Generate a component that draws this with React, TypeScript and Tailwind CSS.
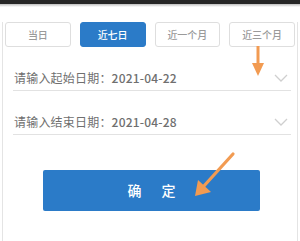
import React from "react";

const font = { fontFamily: '"Noto Sans CJK SC", "Noto Sans", Roboto, sans-serif' };

function Chevron() {
  return (
    <svg width="14" height="8" viewBox="0 0 14 8" className="shrink-0">
      <path d="M1 1 L7 7 L13 1" fill="none" stroke="#cfcfcf" strokeWidth="1.3" />
    </svg>
  );
}

function Row({ label, value, mt }: { label: string; value: string; mt: string }) {
  return (
    <div className={`${mt} ml-[10px] mr-[6px] h-[25px] flex items-center justify-between border-b border-[#e2e2e2] pl-[1px] pr-[3px]`}>
      <span className="text-[12px] leading-none text-[#6f6f6f] tracking-[0.2px]">
        {label}
        <span className="font-medium">{value}</span>
      </span>
      <Chevron />
    </div>
  );
}

export default function App() {
  const tabs = ["当日", "近七日", "近一个月", "近三个月"];
  return (
    <div className="relative w-[300px] h-[241px] bg-white overflow-hidden" style={font}>
      <div className="h-[4px] bg-[#262626]" />
      <div className="h-[3px] bg-gradient-to-b from-[#bdbdbd] to-white" />
      <div className="mx-[2px] h-[234px] border-x border-b border-[#e4e4e4]">
        <div className="mt-[15px] px-[2px] grid grid-cols-4 gap-[9px]">
          {tabs.map((t, i) => (
            <div
              key={t}
              className={
                i === 1
                  ? "h-[25px] rounded-[3px] bg-[#2b7bc8] border border-[#2b7bc8] flex items-center justify-center text-[10px] text-white font-medium"
                  : "h-[25px] rounded-[3px] bg-white border border-[#dedede] flex items-center justify-center text-[10px] text-[#9a9a9a] font-medium"
              }
            >
              {t}
            </div>
          ))}
        </div>
        <Row mt="mt-[19px]" label="请输入起始日期：" value="2021-04-22" />
        <Row mt="mt-[19px]" label="请输入结束日期：" value="2021-04-28" />
        <div className="mt-[35px] ml-[40px] w-[217px] h-[41px] rounded-[2px] bg-[#2b7bc8] flex items-center justify-center">
          <span className="text-[14px] text-white font-medium tracking-[20px] pl-[20px]">确定</span>
        </div>
      </div>
      <svg className="absolute left-0 top-0 pointer-events-none" width="300" height="241">
        <line x1="258" y1="46" x2="258" y2="66" stroke="#f29b52" strokeWidth="3" />
        <polygon points="252,63 264,63 258,76" fill="#f29b52" />
        <line x1="233" y1="154" x2="203" y2="187" stroke="#f29b52" strokeWidth="3.2" strokeLinecap="round" />
        <polygon points="195,196 198,180 211,192" fill="#f29b52" />
      </svg>
    </div>
  );
}
